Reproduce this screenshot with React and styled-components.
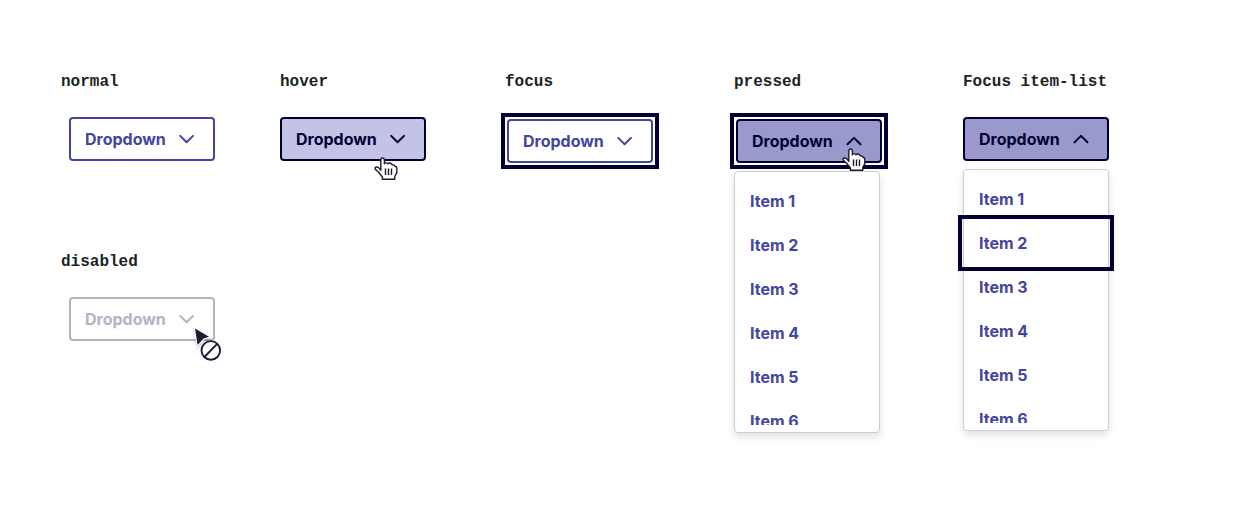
import React from "react";
import styled, { createGlobalStyle, css } from "styled-components";

const GlobalStyle = createGlobalStyle`
  *, *::before, *::after { box-sizing: border-box; }
  body { margin: 0; background: #fff; }
`;

const INK = "#000033";
const INDIGO = "#4444a1";

const tones = {
  normal: { color: INDIGO, border: INDIGO, background: "#fff" },
  hover: { color: INK, border: INK, background: "#c3c3e6" },
  pressed: { color: INK, border: INK, background: "#9999cc" },
  disabled: { color: "#b3b3c3", border: "#b3b3c3", background: "#fff" },
};

const focusRing = css`
  outline: 4px solid ${INK};
  outline-offset: 2px;
`;

const StateGrid = styled.main`
  display: grid;
  grid-template-columns: 219fr 225fr 229fr 229fr 273fr;
  align-content: start;
  row-gap: 89px;
  min-height: 100vh;
  padding: 72px 0 72px 61px;
`;

const StateCell = styled.section`
  grid-column: ${(p) => p.$column};
  display: flex;
  flex-direction: column;
  align-items: flex-start;
  gap: 25px;
`;

const StateName = styled.h2`
  margin: 0;
  font: 700 16px/20px "Liberation Mono", monospace;
  color: #1b2424;
  white-space: nowrap;
`;

const DropdownBox = styled.div`
  position: relative;
  margin-left: ${(p) => (p.$indented ? "8px" : "0")};
  padding: ${(p) => (p.$focused ? "2px 0 0 2px" : "0")};
`;

const FocusFrame = styled.div`
  ${(p) => p.$focused && focusRing}
`;

const Trigger = styled.button`
  display: flex;
  align-items: center;
  justify-content: space-between;
  width: 146px;
  height: 44px;
  margin: 0;
  padding: 0 14px;
  border: 2px solid ${(p) => tones[p.$tone].border};
  border-radius: 4px;
  background: ${(p) => tones[p.$tone].background};
  color: ${(p) => tones[p.$tone].color};
  font: 700 16px/24px Inter, sans-serif;
  cursor: pointer;

  &:disabled { cursor: not-allowed; }
`;

const ChevronIcon = styled.svg`
  flex: none;
  width: 24px;
  height: 24px;
  fill: none;
  stroke: currentColor;
  stroke-width: 2;
  stroke-linecap: round;
  stroke-linejoin: round;
`;

const Menu = styled.div`
  position: absolute;
  top: calc(100% + 8px);
  left: 0;
  width: 146px;
  padding: 7px 0;
  border: 1px solid #ccccd4;
  border-radius: 4px;
  background: #fff;
  box-shadow: 0 4px 8px rgba(0, 0, 0, 0.12);
`;

const MenuList = styled.ul`
  height: 246px;
  margin: 0;
  padding: 0;
  list-style: none;
  overflow-x: visible;
  overflow-y: clip;
`;

const MenuItem = styled.button`
  display: block;
  width: 100%;
  height: 44px;
  padding: 0 15px;
  border: 0;
  background: none;
  color: ${INDIGO};
  font: 700 16px/24px Inter, sans-serif;
  text-align: left;
  cursor: pointer;
  ${(p) => p.$focused && focusRing}
`;

const HandShape = styled.svg`
  position: absolute;
  top: ${(p) => (p.$open ? "31px" : "40px")};
  left: ${(p) => (p.$open ? "108px" : "94px")};
  width: 24px;
  height: 24px;
  pointer-events: none;
`;

const BlockedShape = styled.svg`
  position: absolute;
  top: 28px;
  left: 122px;
  width: 34px;
  height: 38px;
  pointer-events: none;
`;

function Chevron({ up }) {
  return (
    <ChevronIcon viewBox="0 0 24 24" aria-hidden="true">
      <path d={up ? "M5.5 15.2 12 8.9l6.5 6.3" : "M5.2 8.9l6.4 6.3 6.4-6.3"} />
    </ChevronIcon>
  );
}

function HandCursor({ open }) {
  return (
    <HandShape $open={open} viewBox="0 0 24 24" aria-hidden="true">
      <path
        d="M6.8 13.2V2.8Q7 1 8.6 1t1.8 1.8v4Q10.8 5.6 12 5.6T14 6.8Q14.4 6 15.8 6T18 7.8Q18.6 7.4 19.6 7.8T21 9.2Q22.8 9.4 22.8 11.2v4.6L20.8 19V22.2H8.4v-2.2L4.4 15 1.4 12.4Q.6 10.8 1.8 10.2T4.6 10.6L6.8 13.2Z"
        fill="#fff"
        stroke="#1b1a2c"
        strokeWidth="1.4"
        strokeLinejoin="round"
      />
      <path d="M11.5 11.5v6.5M14.5 11.5v6.5M17.5 11.5v6.5" stroke="#1b1a2c" strokeWidth="1.4" />
    </HandShape>
  );
}

function BlockedCursor() {
  return (
    <BlockedShape viewBox="0 0 34 38" aria-hidden="true">
      <defs>
        <filter id="cursor-shadow" x="-50%" y="-50%" width="200%" height="200%">
          <feDropShadow dx="0" dy="1" stdDeviation="1" floodColor="#000" floodOpacity="0.35" />
        </filter>
      </defs>
      <path
        d="M4 3.6 18 11.8 12.6 13.6 6.6 20Z"
        fill="#1b1a33"
        stroke="#fff"
        strokeWidth="2"
        paintOrder="stroke"
        filter="url(#cursor-shadow)"
      />
      <circle cx="19.8" cy="25.4" r="9.3" fill="#fff" stroke="#1b1a33" strokeWidth="1.9" />
      <path d="M13.4 32 26.2 18.9" stroke="#1b1a33" strokeWidth="1.9" />
    </BlockedShape>
  );
}

const items = ["Item 1", "Item 2", "Item 3", "Item 4", "Item 5", "Item 6"];

const states = [
  { name: "normal", column: 1, tone: "normal", indented: true },
  { name: "hover", column: 2, tone: "hover", cursor: "hand" },
  { name: "focus", column: 3, tone: "normal", focused: true },
  { name: "pressed", column: 4, tone: "pressed", focused: true, open: true, cursor: "hand" },
  { name: "Focus item-list", column: 5, tone: "pressed", open: true, focusedItem: "Item 2" },
  { name: "disabled", column: 1, tone: "disabled", indented: true, disabled: true, cursor: "blocked" },
];

function Dropdown({ tone, focused, open, focusedItem, indented, disabled, cursor }) {
  return (
    <DropdownBox $indented={indented} $focused={focused}>
      <FocusFrame $focused={focused}>
        <Trigger
          type="button"
          aria-haspopup="menu"
          aria-expanded={Boolean(open)}
          disabled={disabled}
          $tone={tone}
        >
          Dropdown
          <Chevron up={open} />
        </Trigger>
      </FocusFrame>
      {open && (
        <Menu>
          <MenuList role="menu" aria-label="Dropdown">
            {items.map((item) => (
              <li key={item} role="none">
                <MenuItem type="button" role="menuitem" $focused={item === focusedItem}>
                  {item}
                </MenuItem>
              </li>
            ))}
          </MenuList>
        </Menu>
      )}
      {cursor === "hand" && <HandCursor open={open} />}
      {cursor === "blocked" && <BlockedCursor />}
    </DropdownBox>
  );
}

export default function App() {
  return (
    <>
      <GlobalStyle />
      <StateGrid>
        {states.map(({ name, column, ...dropdown }) => (
          <StateCell key={name} $column={column}>
            <StateName>{name}</StateName>
            <Dropdown {...dropdown} />
          </StateCell>
        ))}
      </StateGrid>
    </>
  );
}
